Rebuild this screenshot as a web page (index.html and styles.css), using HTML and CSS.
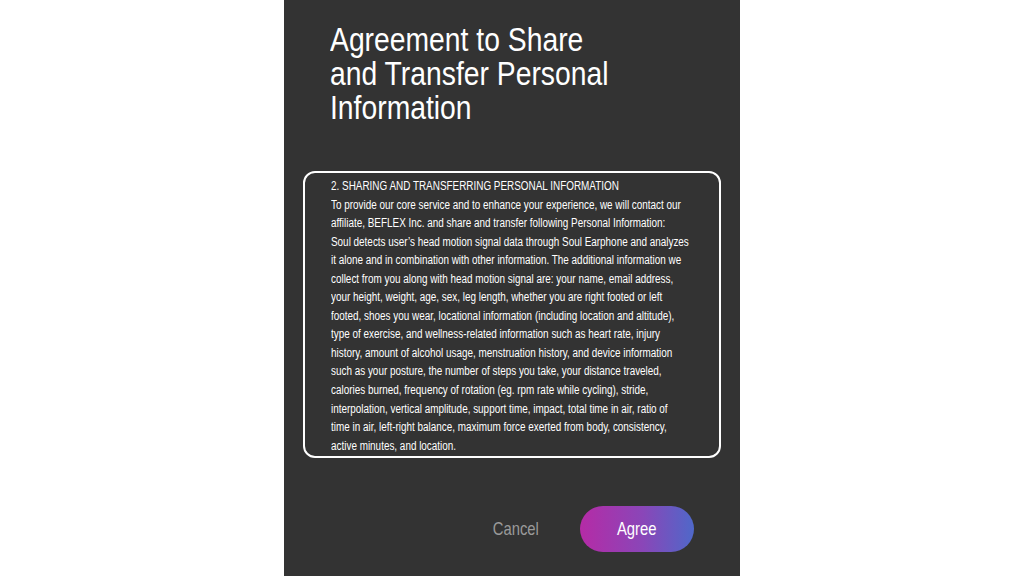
FILE: index.html
```html
<!DOCTYPE html>
<html>
<head>
<meta charset="utf-8">
<link rel="stylesheet" href="styles.css">
</head>
<body>
<main class="panel">
  <h1 class="title">Agreement to Share<br>and Transfer Personal<br>Information</h1>
  <section class="terms">
    <p class="terms-text">2. SHARING AND TRANSFERRING PERSONAL INFORMATION<br>To provide our core service and to enhance your experience, we will contact our<br>affiliate, BEFLEX Inc. and share and transfer following Personal Information:<br>Soul detects user’s head motion signal data through Soul Earphone and analyzes<br>it alone and in combination with other information. The additional information we<br>collect from you along with head motion signal are: your name, email address,<br>your height, weight, age, sex, leg length, whether you are right footed or left<br>footed, shoes you wear, locational information (including location and altitude),<br>type of exercise, and wellness-related information such as heart rate, injury<br>history, amount of alcohol usage, menstruation history, and device information<br>such as your posture, the number of steps you take, your distance traveled,<br>calories burned, frequency of rotation (eg. rpm rate while cycling), stride,<br>interpolation, vertical amplitude, support time, impact, total time in air, ratio of<br>time in air, left-right balance, maximum force exerted from body, consistency,<br>active minutes, and location.</p>
  </section>
  <div class="actions">
    <button class="btn-cancel"><span class="btn-label">Cancel</span></button>
    <button class="btn-agree"><span class="btn-label">Agree</span></button>
  </div>
</main>
</body>
</html>
```
FILE: styles.css
```css
html, body {
  margin: 0;
  padding: 0;
  background: #ffffff;
  height: 100%;
}
body {
  display: flex;
  justify-content: center;
  font-family: "Liberation Sans", Arial, sans-serif;
}
.panel {
  width: 456px;
  height: 576px;
  background: #333333;
  box-sizing: border-box;
  padding: 23px 19px 0 19px;
  display: flex;
  flex-direction: column;
}
.title {
  margin: 0 0 0 27px;
  color: #ffffff;
  font-weight: 400;
  font-size: 33.5px;
  line-height: 34px;
  white-space: nowrap;
  transform: scaleX(0.845);
  transform-origin: left top;
}
.terms {
  margin-top: 46px;
  width: 418px;
  height: 287px;
  box-sizing: border-box;
  border: 2.5px solid #ffffff;
  border-radius: 12px;
  padding: 4px 0 0 26px;
}
.terms-text {
  margin: 0;
  color: #ffffff;
  font-size: 12.5px;
  line-height: 18.55px;
  white-space: nowrap;
  transform: scaleX(0.793);
  transform-origin: left top;
}
.actions {
  display: flex;
  align-items: center;
  justify-content: flex-end;
  margin-top: 48px;
  padding-right: 27px;
  gap: 42px;
}
.btn-cancel {
  background: none;
  border: none;
  padding: 0;
  width: 44px;
  color: #9a9a9a;
  font-family: inherit;
  font-size: 18.5px;
  display: flex;
  justify-content: center;
}
.btn-agree {
  width: 114px;
  height: 46px;
  border: none;
  border-radius: 23px;
  background: linear-gradient(90deg, #b52ba6 0%, #8a46b8 55%, #4f68c9 100%);
  color: #ffffff;
  font-family: inherit;
  font-size: 18.5px;
  display: flex;
  align-items: center;
  justify-content: center;
}
.btn-label {
  display: inline-block;
  transform: scaleX(0.8);
}
```
